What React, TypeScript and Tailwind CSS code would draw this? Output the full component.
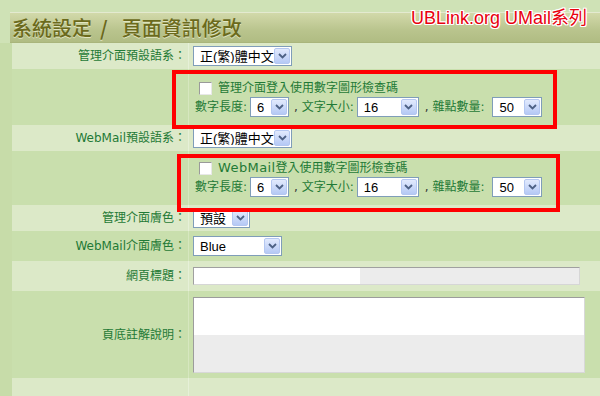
import React from "react";

function Chevron() {
  return (
    <svg width="9" height="6" viewBox="0 0 9 6">
      <path d="M1 1 L4.5 4.5 L8 1" stroke="#4d6185" strokeWidth="1.8" fill="none" />
    </svg>
  );
}

function Sel({ w, children }: { w: string; children: React.ReactNode }) {
  return (
    <div className={`flex items-center h-[20px] border border-[#7f9db9] bg-white ${w}`}>
      <span className="flex-1 pl-[6px] text-[13px] text-black leading-none whitespace-nowrap overflow-hidden font-['Liberation_Sans','Noto_Sans_CJK_TC',sans-serif]">
        {children}
      </span>
      <span className="shrink-0 w-[16px] h-[16px] mr-[1px] rounded-[2px] border border-[#b4c7f1] bg-[linear-gradient(to_bottom,#e2eafd,#b5c9f5)] flex items-center justify-center">
        <Chevron />
      </span>
    </div>
  );
}

function CheckBox() {
  return (
    <span className="inline-block w-[13px] h-[13px] bg-white border border-t-[#9a9a9a] border-l-[#9a9a9a] border-r-[#e8e8e8] border-b-[#e8e8e8]" />
  );
}

function Row({
  h,
  dark,
  label,
  children,
  top,
}: {
  h: string;
  dark?: boolean;
  label?: React.ReactNode;
  children?: React.ReactNode;
  top?: boolean;
}) {
  return (
    <div className={`flex ${h} ${dark ? "bg-[#c9dfad]" : "bg-[#dce9c8]"}`}>
      <div className="w-[176px] flex items-center justify-end pr-[2px]">
        <span className="text-[12px] text-[#1f7a36] whitespace-nowrap">{label}</span>
      </div>
      <div className={`flex-1 border-l ${dark ? "border-[#d6e7bf]" : "border-[#e6f0d8]"} pl-[4px] ${top ? "flex flex-col" : "flex items-center"}`}>
        {children}
      </div>
    </div>
  );
}

function CaptchaLines({ title, pt }: { title: React.ReactNode; pt: string }) {
  return (
    <div className={`flex flex-col ${pt}`}>
      <div className="h-[18px] flex items-center pl-[6px]">
        <CheckBox />
        <span className="ml-[6px] text-[12px] text-[#1f7a36] whitespace-nowrap">{title}</span>
      </div>
      <div className="h-[20px] flex items-center pl-[2px] text-[12px] text-[#1f7a36] whitespace-nowrap">
        <span>數字長度:</span>
        <span className="ml-[3px]"><Sel w="w-[39px]">6</Sel></span>
        <span className="ml-[5px]"><span className="text-[#333]">,</span> 文字大小:</span>
        <span className="ml-[3px]"><Sel w="w-[62px]">16</Sel></span>
        <span className="ml-[6px]"><span className="text-[#333]">,</span> 雜點數量:</span>
        <span className="ml-[8px]"><Sel w="w-[50px]">50</Sel></span>
      </div>
    </div>
  );
}

export default function App() {
  return (
    <div className="relative w-[600px] h-[396px] overflow-hidden bg-[#cfe2b6] font-['DejaVu_Sans','Noto_Sans_CJK_TC',sans-serif]">
      {/* header */}
      <div className="pt-[12px] pl-[10px]">
        <div className="h-[31px] flex items-center pl-[2px] border-t border-[#e4ead0] border-b border-b-[#a9b57c] bg-[linear-gradient(to_bottom,#d2d9aa,#b9c48d_60%,#b0bc83)]">
          <span className="flex items-center text-[20px] leading-none font-medium text-[#6b6a1c] font-['Noto_Sans_CJK_TC',sans-serif] whitespace-nowrap [text-shadow:0_1px_0_#e2e6c2]">
            <span>系統設定</span>
            <span className="font-bold ml-[8px] mr-[14px]">/</span>
            <span>頁面資訊修改</span>
          </span>
        </div>
      </div>
      <div className="flex">
        <div className="w-[12px] bg-[#c7dca9]" />
        <div className="flex-1 flex flex-col">
          <Row h="h-[26px]" label="管理介面預設語系：">
            <Sel w="w-[99px]">正(繁)體中文</Sel>
          </Row>
          <Row h="h-[56px]" dark top>
            <CaptchaLines pt="pt-[10px]" title="管理介面登入使用數字圖形檢查碼" />
          </Row>
          <Row h="h-[26px]" label="WebMail預設語系：">
            <Sel w="w-[99px]">正(繁)體中文</Sel>
          </Row>
          <Row h="h-[54px]" dark top>
            <CaptchaLines
              pt="pt-[8px]"
              title={
                <>
                  <span className="text-[13px] tracking-[0.4px]">WebMail</span>登入使用數字圖形檢查碼
                </>
              }
            />
          </Row>
          <Row h="h-[26px]" label="管理介面膚色：">
            <Sel w="w-[57px]">預設</Sel>
          </Row>
          <Row h="h-[30px]" dark label="WebMail介面膚色：">
            <Sel w="w-[89px]">Blue</Sel>
          </Row>
          <Row h="h-[30px]" label="網頁標題：">
            <div className="w-[387px] h-[18px] border border-t-[#a0a0a0] border-l-[#a0a0a0] border-r-[#d6d6d6] border-b-[#d6d6d6] bg-[linear-gradient(to_right,#fff_0,#fff_166px,#ececec_166px)]" />
          </Row>
          <Row h="h-[87px]" dark label="頁底註解說明：">
            <div className="w-[392px] h-[76px] border border-t-[#9c9c9c] border-l-[#9c9c9c] border-r-[#d8d8d8] border-b-[#d8d8d8] bg-[linear-gradient(to_bottom,#fff_0,#fff_37px,#ececec_37px)]" />
          </Row>
          <Row h="h-[30px]" />
        </div>
      </div>

      {/* annotation overlays */}
      <div className="absolute left-[172px] top-[70px] w-[385px] h-[59px] border-[4px] border-[#ff0000]" />
      <div className="absolute left-[177px] top-[154px] w-[383px] h-[58px] border-[4px] border-[#ff0000]" />
      <div className="absolute left-[411px] top-[8px] text-[18px] leading-[20px] text-[#e8000e] font-['Liberation_Sans','Noto_Sans_CJK_TC',sans-serif] whitespace-nowrap [text-shadow:-1px_-1px_0_#fff,1px_-1px_0_#fff,-1px_1px_0_#fff,1px_1px_0_#fff,0_1px_0_#fff,0_-1px_0_#fff,1px_0_0_#fff,-1px_0_0_#fff]">
        UBLink.org UMail系列
      </div>
    </div>
  );
}
